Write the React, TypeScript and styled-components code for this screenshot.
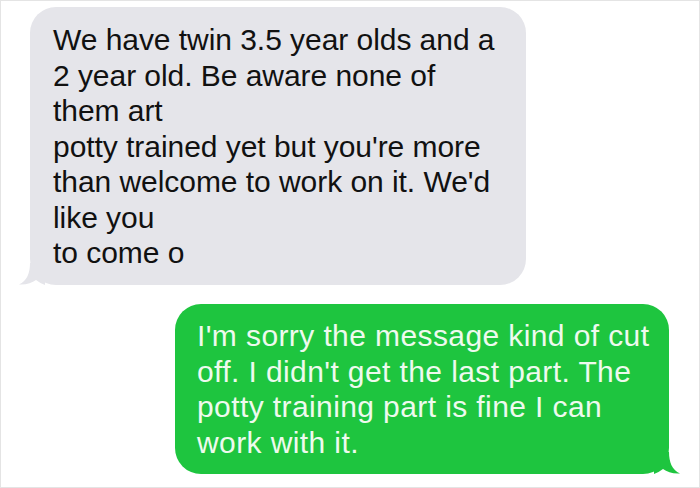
import styled, { createGlobalStyle } from "styled-components";

const GlobalStyle = createGlobalStyle`
  html, body {
    margin: 0;
    padding: 0;
    background: #ffffff;
  }
  * {
    box-sizing: border-box;
  }
`;

const Frame = styled.div`
  width: 700px;
  height: 488px;
  border: 1px solid #e4e4e4;
  background: #ffffff;
  display: flex;
  flex-direction: column;
  padding: 6px 0 0 0;
  font-family: "Liberation Sans", Arial, sans-serif;
`;

const Row = styled.div<{ $mine?: boolean }>`
  display: flex;
  justify-content: ${props => (props.$mine ? "flex-end" : "flex-start")};
  padding: ${props => (props.$mine ? "0 30px 0 0" : "0 0 0 29px")};
  margin-top: ${props => (props.$mine ? "19px" : "0")};
`;

const Bubble = styled.div<{ $mine?: boolean }>`
  position: relative;
  width: ${props => (props.$mine ? "494px" : "496px")};
  height: ${props => (props.$mine ? "170px" : "278px")};
  background: ${props => (props.$mine ? "#1ec53f" : "#e5e5ea")};
  color: ${props => (props.$mine ? "#eefaee" : "#111111")};
  border-radius: 26px;
  padding: ${props => (props.$mine ? "14px 10px 0 22px" : "15px 10px 0 23px")};
  font-size: 30px;
  line-height: 35.5px;
  letter-spacing: ${props => (props.$mine ? "0.4px" : "-0.05px")};
  white-space: nowrap;
`;

const Tail = styled.svg<{ $mine?: boolean }>`
  position: absolute;
  bottom: 0;
  width: 26px;
  height: 22px;
  ${props => (props.$mine ? "right: -11px;" : "left: -11px;")}
`;

const BubbleTail = ({ mine, color }: { mine?: boolean; color: string }) => (
  <Tail $mine={mine} viewBox="0 0 26 22">
    {mine ? (
      <path d="M0 0 L15 0 C15 10 18 18 26 21.5 C19 22 13 20 9 17 C6 19 3 21 0 22 Z" fill={color} />
    ) : (
      <path d="M26 0 L11 0 C11 10 8 18 0 21.5 C7 22 13 20 17 17 C20 19 23 21 26 22 Z" fill={color} />
    )}
  </Tail>
);

const App = () => {
  return (
    <>
      <GlobalStyle />
      <Frame>
        <Row>
          <Bubble>
            We have twin 3.5 year olds and a<br />
            2 year old. Be aware none of<br />
            them art<br />
            potty trained yet but you're more<br />
            than welcome to work on it. We'd<br />
            like you<br />
            to come o
            <BubbleTail color="#e5e5ea" />
          </Bubble>
        </Row>
        <Row $mine>
          <Bubble $mine>
            I'm sorry the message kind of cut<br />
            off. I didn't get the last part. The<br />
            potty training part is fine I can<br />
            work with it.
            <BubbleTail mine color="#1ec53f" />
          </Bubble>
        </Row>
      </Frame>
    </>
  );
};

export default App;
